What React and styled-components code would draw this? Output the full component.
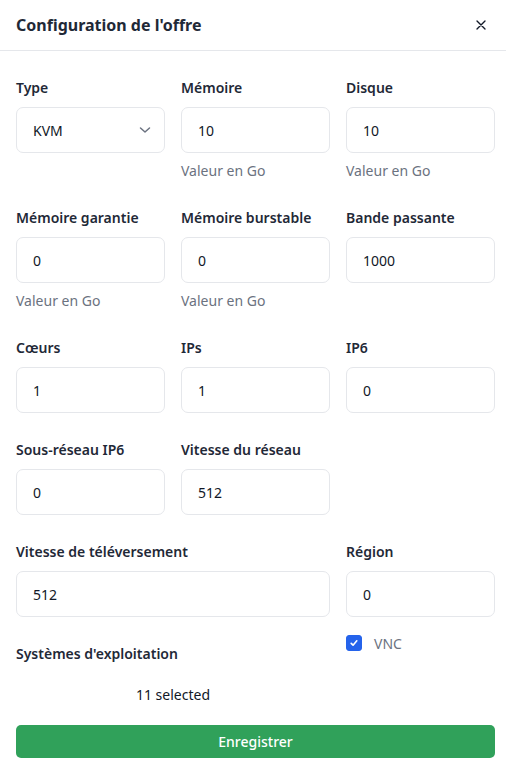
import React, { useState } from "react";
import styled, { createGlobalStyle } from "styled-components";

const GlobalStyle = createGlobalStyle`
  html, body {
    margin: 0;
    padding: 0;
    background: #ffffff;
  }
  body {
    font-family: "Noto Sans", "DejaVu Sans", sans-serif;
    color: #111827;
  }
  * { box-sizing: border-box; }
`;

const Modal = styled.div`
  width: 506px;
  min-height: 767px;
  background: #ffffff;
`;

const Header = styled.div`
  height: 51px;
  display: flex;
  align-items: center;
  justify-content: space-between;
  padding: 0 17px 0 16px;
  border-bottom: 1px solid #e5e7eb;
`;

const Title = styled.h2`
  margin: 0;
  font-size: 16px;
  font-weight: 700;
  color: #1f2937;
`;

const CloseButton = styled.button`
  border: none;
  background: transparent;
  padding: 0;
  display: flex;
  align-items: center;
  justify-content: center;
  color: #111827;
  cursor: pointer;
`;

const Body = styled.div`
  padding: 27px 11px 16px 16px;
`;

const Grid = styled.div`
  display: grid;
  grid-template-columns: repeat(3, 1fr);
  column-gap: 16px;
  row-gap: 27px;
`;

const Field = styled.div`
  display: flex;
  flex-direction: column;
  grid-column: span ${(p) => p.$span || 1};
`;

const Label = styled.label`
  font-size: 14px;
  line-height: 20px;
  font-weight: 600;
  color: #1f2937;
  margin-bottom: 9px;
`;

const Input = styled.input`
  height: 46px;
  width: 100%;
  border: 1px solid #e5e7eb;
  border-radius: 7px;
  padding: 0 16px;
  font-family: inherit;
  font-size: 14px;
  color: #111827;
  background: #ffffff;
  outline: none;
`;

const SelectBox = styled.div`
  height: 46px;
  border: 1px solid #e5e7eb;
  border-radius: 7px;
  display: flex;
  align-items: center;
  justify-content: space-between;
  padding: 0 13px 0 16px;
  font-size: 14px;
  color: #111827;
`;

const Helper = styled.span`
  margin-top: 8px;
  font-size: 14px;
  line-height: 20px;
  color: #6b7280;
`;

const BottomRow = styled.div`
  display: grid;
  grid-template-columns: repeat(3, 1fr);
  column-gap: 16px;
  margin-top: 18px;
`;

const OsBlock = styled.div`
  grid-column: span 2;
  display: flex;
  flex-direction: column;
  padding-top: 9px;
`;

const OsLabel = styled.span`
  font-size: 14px;
  line-height: 20px;
  font-weight: 600;
  color: #1f2937;
`;

const MultiSelect = styled.div`
  margin-top: 21px;
  text-align: center;
  font-size: 14px;
  line-height: 20px;
  color: #111827;
`;

const CheckRow = styled.label`
  display: flex;
  align-items: center;
  gap: 12px;
  height: 16px;
  font-size: 14px;
  color: #6b7280;
  cursor: pointer;
`;

const Check = styled.span`
  width: 16px;
  height: 16px;
  border-radius: 3px;
  background: ${(p) => (p.$checked ? "#2563eb" : "#ffffff")};
  border: 1px solid ${(p) => (p.$checked ? "#2563eb" : "#d1d5db")};
  display: flex;
  align-items: center;
  justify-content: center;
`;

const SaveButton = styled.button`
  margin-top: 20px;
  width: 100%;
  height: 33px;
  border: none;
  border-radius: 5px;
  background: #30a15a;
  color: #ffffff;
  font-family: inherit;
  font-size: 14px;
  font-weight: 500;
  cursor: pointer;
`;

const Chevron = () => (
  <svg width="12" height="8" viewBox="0 0 12 8" fill="none" stroke="#6b7280" strokeWidth="1.5" strokeLinecap="round" strokeLinejoin="round">
    <path d="M1.5 2l4.5 4 4.5-4" />
  </svg>
);

const fields = [
  { label: "Mémoire", value: "10", helper: "Valeur en Go" },
  { label: "Disque", value: "10", helper: "Valeur en Go" },
  { label: "Mémoire garantie", value: "0", helper: "Valeur en Go" },
  { label: "Mémoire burstable", value: "0", helper: "Valeur en Go" },
  { label: "Bande passante", value: "1000" },
  { label: "Cœurs", value: "1" },
  { label: "IPs", value: "1" },
  { label: "IP6", value: "0" },
  { label: "Sous-réseau IP6", value: "0" },
  { label: "Vitesse du réseau", value: "512" },
];

export default function App() {
  const [vnc, setVnc] = useState(true);

  return (
    <Modal>
      <GlobalStyle />
      <Header>
        <Title>Configuration de l'offre</Title>
        <CloseButton aria-label="Fermer">
          <svg width="16" height="16" viewBox="0 0 24 24" fill="none" stroke="currentColor" strokeWidth="2" strokeLinecap="round">
            <path d="M18 6 6 18M6 6l12 12" />
          </svg>
        </CloseButton>
      </Header>
      <Body>
        <Grid>
          <Field>
            <Label>Type</Label>
            <SelectBox>
              KVM
              <Chevron />
            </SelectBox>
          </Field>
          {fields.map((f) => (
            <Field key={f.label}>
              <Label>{f.label}</Label>
              <Input defaultValue={f.value} />
              {f.helper && <Helper>{f.helper}</Helper>}
            </Field>
          ))}
          <div />
          <Field $span={2}>
            <Label>Vitesse de téléversement</Label>
            <Input defaultValue="512" />
          </Field>
          <Field>
            <Label>Région</Label>
            <Input defaultValue="0" />
          </Field>
        </Grid>
        <BottomRow>
          <OsBlock>
            <OsLabel>Systèmes d'exploitation</OsLabel>
            <MultiSelect>11 selected</MultiSelect>
          </OsBlock>
          <div>
            <CheckRow onClick={() => setVnc(!vnc)}>
              <Check $checked={vnc}>
                {vnc && (
                  <svg width="10" height="10" viewBox="0 0 16 16" fill="none" stroke="#fff" strokeWidth="2.6" strokeLinecap="round" strokeLinejoin="round">
                    <path d="M3.5 8.5l3 3 6-7" />
                  </svg>
                )}
              </Check>
              VNC
            </CheckRow>
          </div>
        </BottomRow>
        <SaveButton>Enregistrer</SaveButton>
      </Body>
    </Modal>
  );
}
